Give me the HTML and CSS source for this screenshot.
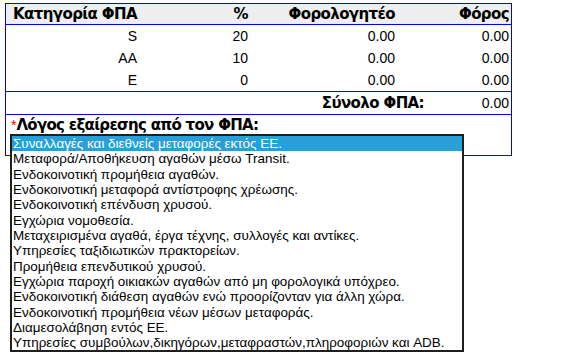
FILE: index.html
```html
<!DOCTYPE html>
<html lang="el">
<head>
<meta charset="utf-8">
<link rel="stylesheet" href="styles.css">
</head>
<body>
<div class="vat">
  <div class="row head">
    <div class="c">Κατηγορία ΦΠΑ</div>
    <div class="c">%</div>
    <div class="c">Φορολογητέο</div>
    <div class="c">Φόρος</div>
  </div>
  <div class="body">
    <div class="row"><div class="c">S</div><div class="c">20</div><div class="c">0.00</div><div class="c">0.00</div></div>
    <div class="row"><div class="c">AA</div><div class="c">10</div><div class="c">0.00</div><div class="c">0.00</div></div>
    <div class="row"><div class="c">E</div><div class="c">0</div><div class="c">0.00</div><div class="c">0.00</div></div>
  </div>
  <div class="total">
    <div class="total-label">Σύνολο ΦΠΑ:</div>
    <div class="total-value">0.00</div>
  </div>
  <div class="reason">
    <div class="reason-label"><span class="req">*</span>Λόγος εξαίρεσης από τον ΦΠΑ:</div>
  </div>
</div>
<ul class="listbox">
  <li class="sel">Συναλλαγές και διεθνείς μεταφορές εκτός ΕΕ.</li>
  <li>Μεταφορά/Αποθήκευση αγαθών μέσω Transit.</li>
  <li>Ενδοκοινοτική προμήθεια αγαθών.</li>
  <li>Ενδοκοινοτική μεταφορά αντίστροφης χρέωσης.</li>
  <li>Ενδοκοινοτική επένδυση χρυσού.</li>
  <li>Εγχώρια νομοθεσία.</li>
  <li>Μεταχειρισμένα αγαθά, έργα τέχνης, συλλογές και αντίκες.</li>
  <li>Υπηρεσίες ταξιδιωτικών πρακτορείων.</li>
  <li>Προμήθεια επενδυτικού χρυσού.</li>
  <li>Εγχώρια παροχή οικιακών αγαθών από μη φορολογικά υπόχρεο.</li>
  <li>Ενδοκοινοτική διάθεση αγαθών ενώ προορίζονταν για άλλη χώρα.</li>
  <li>Ενδοκοινοτική προμήθεια νέων μέσων μεταφοράς.</li>
  <li>Διαμεσολάβηση εντός ΕΕ.</li>
  <li>Υπηρεσίες συμβούλων,δικηγόρων,μεταφραστών,πληροφοριών και ADB.</li>
</ul>
</body>
</html>
```

FILE: styles.css
```css
html, body {
  margin: 0;
  padding: 0;
  background: #ffffff;
}
body {
  position: relative;
  width: 569px;
  height: 357px;
  overflow: hidden;
  font-family: "Liberation Sans", Arial, sans-serif;
  color: #000;
}
.vat {
  margin: 3px 0 0 5px;
  width: 505px;
  border: 1px solid #0000ff;
}
.row {
  display: grid;
  grid-template-columns: 133px 111px 147px 114px;
  height: 22px;
  align-items: center;
  font-size: 14px;
}
.row .c {
  text-align: right;
  padding-right: 2px;
  white-space: nowrap;
}
.head {
  height: 20px;
  background: #eeeeee;
  border-bottom: 1px solid #0000ff;
  font-family: "DejaVu Sans", Verdana, sans-serif;
  font-weight: bold;
  font-size: 15px;
  letter-spacing: -0.6px;
}
.body {
  border-bottom: 1px solid #0000ff;
}
.total {
  display: flex;
  justify-content: flex-end;
  align-items: center;
  height: 22px;
  border-bottom: 1px solid #0000ff;
}
.total-label {
  font-family: "DejaVu Sans", Verdana, sans-serif;
  font-weight: bold;
  font-size: 15px;
  letter-spacing: -0.6px;
  white-space: nowrap;
}
.total-value {
  width: 85px;
  padding-right: 2px;
  text-align: right;
  font-size: 14px;
}
.reason {
  height: 40px;
}
.reason-label {
  padding-left: 5px;
  line-height: 20px;
  font-family: "DejaVu Sans", Verdana, sans-serif;
  font-weight: bold;
  font-size: 15px;
  letter-spacing: -0.7px;
  white-space: nowrap;
}
.req {
  color: #e00000;
  font-weight: normal;
  font-family: "Liberation Sans", Arial, sans-serif;
  font-size: 14px;
  letter-spacing: 0;
}
.listbox {
  position: absolute;
  left: 10px;
  top: 134px;
  width: 450px;
  height: 214px;
  margin: 0;
  padding: 0;
  list-style: none;
  background: #ffffff;
  border: 2px solid #1f1f1f;
  font-size: 13.45px;
  overflow: hidden;
}
.listbox li {
  height: 15.35px;
  line-height: 15.35px;
  padding-left: 1px;
  white-space: nowrap;
}
.listbox li.sel {
  background: #2a9ed9;
  color: #ffffff;
}
```
